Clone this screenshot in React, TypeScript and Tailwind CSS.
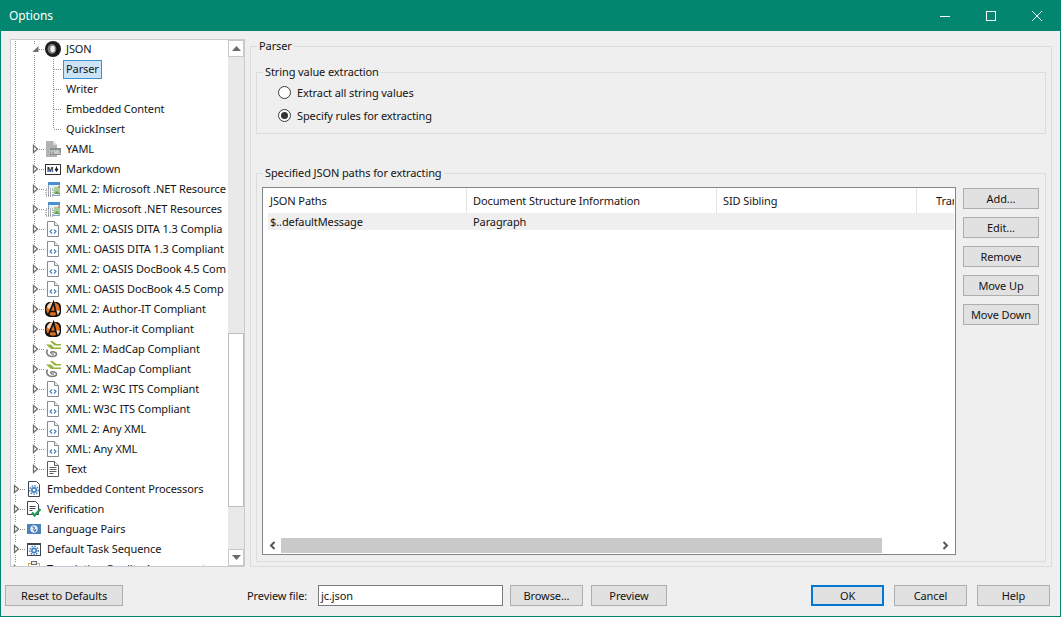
import type { ReactNode } from "react"

const DOTS = "#8f8f8f"

function Fold({ stroke = "#858b91" }: { stroke?: string }) {
  return (
    <>
      <path d="M2.5 .5h7l4 4v11h-11z" fill="#fff" stroke={stroke} />
      <path d="M9.5 .5v4h4" fill="#f0f0f0" stroke={stroke} />
    </>
  )
}

function Gear({ x, y }: { x: number; y: number }) {
  return (
    <g transform={`translate(${x} ${y})`}>
      <circle cx="0" cy="0" r="4.2" fill="none" stroke="#3f7fc0" strokeWidth="1.4" strokeDasharray="1.6 1.2" />
      <circle cx="0" cy="0" r="3" fill="#3f7fc0" />
      <circle cx="0" cy="0" r="1.3" fill="#fff" />
    </g>
  )
}

const icons: Record<string, ReactNode> = {
  json: (
    <>
      <circle cx="8" cy="8" r="8" fill="#1d1d1d" />
      <ellipse cx="7" cy="8" rx="4.4" ry="5" fill="#7d7d7d" />
      <ellipse cx="7.600" cy="8" rx="2.200" ry="3.200" fill="#f2f2f2" />
      <path d="M10.800 3.600a6 6 0 0 1 0 8.800" fill="none" stroke="#111" strokeWidth="1.600" />
    </>
  ),
  yaml: (
    <>
      <path d="M1 0h7l4 4v12H1z" fill="#b2b2b2" />
      <path d="M8 0v4h4z" fill="#d8d8d8" />
      <rect x="5" y="7" width="11" height="7" fill="#8e8e8e" />
      <text x="10.5" y="12.6" textAnchor="middle" fontSize="5.5" fontWeight="700" fill="#e8e8e8" fontFamily="Liberation Sans, sans-serif">YML</text>
    </>
  ),
  markdown: (
    <>
      <rect x=".5" y="3.5" width="15" height="10" fill="#fff" stroke="#333" />
      <text x="2" y="11.2" fontSize="7.5" fontWeight="700" fill="#222" fontFamily="Liberation Sans, sans-serif">M</text>
      <path d="M11.5 5.5v3M10 8h3l-1.5 2.5z" fill="#222" stroke="#222" strokeWidth="1" />
    </>
  ),
  resource: (
    <>
      <rect x="3.5" y="1.5" width="11" height="13" fill="#e8f1fa" stroke="#8aa4bf" />
      <rect x="3" y="1" width="12" height="3" fill="#4a90d0" />
      <rect x="1" y="8" width="7" height="7" fill="#fff" stroke="#67727d" strokeDasharray="1 1" />
      <path d="M3 10h4M3 12h4M3 14h4" stroke="#47525d" strokeWidth="1" strokeDasharray="1 1" />
      <rect x="9" y="6" width="6" height="7" fill="#a6cf9a" />
      <path d="M9 13l3-3 3 3z" fill="#5f9d4a" />
      <rect x="13" y="5" width="2" height="2" fill="#e0894a" />
    </>
  ),
  xml: (
    <>
      <Fold />
      <path d="M7 8.500 5 10.500l2 2M9 8.500l2 2-2 2" fill="none" stroke="#3f7fc0" strokeWidth="1.100" />
    </>
  ),
  authorit: (
    <>
      <rect x="0" y="1" width="16" height="15" rx="5" fill="#111" />
      <circle cx="8" cy="8" r="6.800" fill="#e0701f" />
      <path d="M2 6c1-3 3-5 6-5l-1 5-3 2zM11 9l4 1-2 4-3-1z" fill="#f7d9bf" />
      <path d="M3 15 8.500 1.500 12 15M5.500 10.500h5.500" fill="none" stroke="#111" strokeWidth="1.700" />
    </>
  ),
  madcap: (
    <>
      <path d="M5 0h2.500l4 3H16v1.500H9.500zM1 3.500h5l3 3H16V8H6z" fill="#94b33c" />
      <path d="M2.500 8.500c-2 3 0 7 4.500 7 2.500 0 4.500-1 4.500-2.500 0-2-4-3-6-1.500" fill="none" stroke="#7b7b7b" strokeWidth="1.600" />
      <path d="M5.500 11.500c0 1 1.500 2 3.500 1.500" fill="none" stroke="#3f3f3f" strokeWidth="1" />
    </>
  ),
  text: (
    <>
      <Fold stroke="#5c5c5c" />
      <path d="M4.500 6.500h7M4.500 8.500h7M4.500 10.500h7M4.500 12.500h4" stroke="#5c5c5c" strokeWidth="1" />
    </>
  ),
  embedded: (
    <>
      <path d="M2.500 .5h8l3 3v12h-11z" fill="#fff" stroke="#3d4650" />
      <Gear x={8} y={9} />
    </>
  ),
  verify: (
    <>
      <path d="M1.500 .5h8l3 3v10h-11z" fill="#fff" stroke="#3d4650" />
      <path d="M3.500 5.500h6M3.500 7.500h6M3.500 9.500h3" stroke="#3d4650" strokeWidth="1" />
      <path d="M6 11.500l2.500 3 6-6.500" fill="none" stroke="#1d9a57" strokeWidth="2.200" />
    </>
  ),
  language: (
    <>
      <rect x="1" y="3" width="14" height="10" fill="#4a82bd" />
      <circle cx="8" cy="8" r="3.700" fill="#e6eef6" />
      <path d="M6.500 5.500l2 1.500-1 1.500 1.500 2 1-2.500" fill="none" stroke="#4a82bd" strokeWidth="1.100" />
    </>
  ),
  task: (
    <>
      <rect x="1.500" y="2.500" width="13" height="12" fill="#fff" stroke="#3d4650" />
      <rect x="1" y="2" width="14" height="2" fill="#3d4650" />
      <Gear x={8} y={9.500} />
    </>
  ),
  clipboard: (
    <>
      <rect x="2.500" y="2.500" width="11" height="13" fill="#fff" stroke="#d2a85c" />
      <rect x="5.500" y=".5" width="5" height="3" fill="#eee" stroke="#6a6a6a" />
    </>
  ),
}

type Row = { label: string; level: 0 | 1 | 2; icon?: string; open?: boolean; last?: boolean; selected?: boolean }

const rows: Row[] = [
  { label: "JSON", level: 1, icon: "json", open: true },
  { label: "Parser", level: 2, selected: true },
  { label: "Writer", level: 2 },
  { label: "Embedded Content", level: 2 },
  { label: "QuickInsert", level: 2, last: true },
  { label: "YAML", level: 1, icon: "yaml" },
  { label: "Markdown", level: 1, icon: "markdown" },
  { label: "XML 2: Microsoft .NET Resource", level: 1, icon: "resource" },
  { label: "XML: Microsoft .NET Resources", level: 1, icon: "resource" },
  { label: "XML 2: OASIS DITA 1.3 Complia", level: 1, icon: "xml" },
  { label: "XML: OASIS DITA 1.3 Compliant", level: 1, icon: "xml" },
  { label: "XML 2: OASIS DocBook 4.5 Com", level: 1, icon: "xml" },
  { label: "XML: OASIS DocBook 4.5 Comp", level: 1, icon: "xml" },
  { label: "XML 2: Author-IT Compliant", level: 1, icon: "authorit" },
  { label: "XML: Author-it Compliant", level: 1, icon: "authorit" },
  { label: "XML 2: MadCap Compliant", level: 1, icon: "madcap" },
  { label: "XML: MadCap Compliant", level: 1, icon: "madcap" },
  { label: "XML 2: W3C ITS Compliant", level: 1, icon: "xml" },
  { label: "XML: W3C ITS Compliant", level: 1, icon: "xml" },
  { label: "XML 2: Any XML", level: 1, icon: "xml" },
  { label: "XML: Any XML", level: 1, icon: "xml" },
  { label: "Text", level: 1, icon: "text", last: true },
  { label: "Embedded Content Processors", level: 0, icon: "embedded" },
  { label: "Verification", level: 0, icon: "verify" },
  { label: "Language Pairs", level: 0, icon: "language" },
  { label: "Default Task Sequence", level: 0, icon: "task" },
  { label: "Translation Quality Assessment", level: 0, icon: "clipboard" },
]

function Dotted({ d }: { d: string }) {
  return <path d={d} stroke={DOTS} strokeWidth="1" strokeDasharray="1 1" fill="none" />
}

function Arrow({ x, open }: { x: number; open?: boolean }) {
  if (open) return <path d={`M${x + 5.500} 7v6h-6z`} fill="#6d6d6d" />
  return <path d={`M${x + .5} 6.500l4 3.500-4 3.500z`} fill="#fff" stroke="#6f6f6f" strokeWidth="1.300" />
}

function TreeRow({ row }: { row: Row }) {
  const width = row.level === 0 ? 36 : row.level === 1 ? 55 : 52
  return (
    <div className="flex h-5 shrink-0 items-center">
      <svg width={width} height="20" viewBox={`0 0 ${width} 20`} className="shrink-0">
        {row.level > 0 && <Dotted d="M4.500 0v20" />}
        {row.level === 0 && <Dotted d="M4.500 0v4M4.500 16v4" />}
        {row.level === 1 && <Dotted d={row.last ? "M23.500 0v5" : "M23.500 0v5M23.500 16v4"} />}
        {row.level === 2 && (
          <>
            <Dotted d="M23.500 0v20" />
            <Dotted d={row.last ? "M42.500 0v10M43 10.500h8" : "M42.500 0v20M43 10.500h8"} />
          </>
        )}
        {row.level === 0 && <Dotted d="M9 10.500h5" />}
        {row.level === 1 && <Dotted d="M28 10.500h5" />}
        {row.level === 0 && <Arrow x={3} />}
        {row.level === 1 && <Arrow x={22} open={row.open} />}
        {row.icon && <g transform={`translate(${row.level === 0 ? 15 : 34} 2)`}>{icons[row.icon]}</g>}
      </svg>
      {row.selected ? (
        <span className="mt-[1px] flex h-[19px] items-center border border-[#3d92d3] bg-[#cde4f7] px-[2px] pb-[2px]">{row.label}</span>
      ) : (
        <span className={row.level === 2 ? "whitespace-nowrap pb-[2px] pl-[3px]" : "whitespace-nowrap pb-[2px]"}>{row.label}</span>
      )}
    </div>
  )
}

function ScrollButton({ down }: { down?: boolean }) {
  return (
    <div className="flex h-[17px] w-[16px] shrink-0 items-center justify-center border border-[#c8c8c8] bg-white">
      <svg width="9" height="5" viewBox="0 0 9 5">
        <path d={down ? "M0 0h9L4.500 5z" : "M0 5h9L4.500 0z"} fill="#6a6a6a" />
      </svg>
    </div>
  )
}

function Tree() {
  return (
    <div className="flex h-[528px] w-[235px] shrink-0 overflow-hidden border border-[#c6ccd2] bg-white">
      <div className="-mt-px flex w-[217px] shrink-0 flex-col overflow-hidden">
        {rows.map((row) => (
          <TreeRow key={row.label} row={row} />
        ))}
      </div>
      <div className="flex w-[17px] flex-col bg-[#e9e9e9]">
        <ScrollButton />
        <div className="mt-[276px] h-[174px] w-[16px] border border-[#bdbdbd] bg-white" />
        <div className="mt-auto">
          <ScrollButton down />
        </div>
      </div>
    </div>
  )
}

function Button({ children, className = "w-[76px]" }: { children: ReactNode; className?: string }) {
  return (
    <button className={`flex h-[21px] shrink-0 items-center justify-center border border-[#adadad] bg-[#e1e1e1] ${className}`}>
      {children}
    </button>
  )
}

function Radio({ label, checked }: { label: string; checked?: boolean }) {
  return (
    <div className="flex h-[23px] items-center">
      <span className="flex h-[13px] w-[13px] items-center justify-center rounded-full border border-[#3c3c3c] bg-white">
        {checked && <span className="h-[7px] w-[7px] rounded-full bg-[#333]" />}
      </span>
      <span className="ml-[6px]">{label}</span>
    </div>
  )
}

function PathsTable() {
  return (
    <div className="flex h-[368px] w-[694px] shrink-0 flex-col border border-[#82868b] bg-white">
      <div className="flex h-[25px] w-[691px] shrink-0 items-center overflow-hidden whitespace-nowrap">
        <div className="flex h-full w-[204px] shrink-0 items-center border-r border-[#e5e5e5] pl-[7px]">JSON Paths</div>
        <div className="flex h-full w-[250px] shrink-0 items-center border-r border-[#e5e5e5] pl-[6px]">Document Structure Information</div>
        <div className="flex h-full w-[200px] shrink-0 items-center border-r border-[#e5e5e5] pl-[6px]">SID Sibling</div>
        <div className="pl-[19px]">Tran</div>
      </div>
      <div className="ml-[5px] flex h-[17px] w-[686px] shrink-0 items-center bg-[#efefef]">
        <div className="w-[199px] pl-[2px]">$..defaultMessage</div>
        <div className="pl-[6px]">Paragraph</div>
      </div>
      <div className="mb-[1px] mt-auto flex h-[15px] shrink-0 items-center">
        <div className="flex w-[18px] justify-center">
          <svg width="7" height="9" viewBox="0 0 7 9">
            <path d="M5.500 1 2 4.500 5.500 8" fill="none" stroke="#555" strokeWidth="2" />
          </svg>
        </div>
        <div className="h-full w-[601px] bg-[#c9c9c9]" />
        <div className="flex flex-1 justify-end pr-[6px]">
          <svg width="7" height="9" viewBox="0 0 7 9">
            <path d="M1.500 1 5 4.500 1.500 8" fill="none" stroke="#555" strokeWidth="2" />
          </svg>
        </div>
      </div>
    </div>
  )
}

export default function App() {
  return (
    <div className="flex h-[617px] w-[1061px] flex-col overflow-hidden border-x border-b border-[#02866f] bg-[#efefef] font-['Noto_Sans',sans-serif] text-[11px] leading-none tracking-[-0.1px] text-[#141414]">
      <div className="-mx-px flex h-[31px] shrink-0 items-center bg-[#02866f] pl-[9px] text-[12px] text-white">
        Options
        <div className="ml-auto flex h-full pr-px">
          <div className="flex w-[46px] items-center justify-center">
            <svg width="10" height="10" viewBox="0 0 10 10">
              <path d="M0 5.500h10" stroke="#fff" />
            </svg>
          </div>
          <div className="flex w-[46px] items-center justify-center">
            <svg width="10" height="10" viewBox="0 0 10 10">
              <rect x=".5" y=".5" width="9" height="9" fill="none" stroke="#fff" />
            </svg>
          </div>
          <div className="flex w-[46px] items-center justify-center">
            <svg width="10" height="10" viewBox="0 0 10 10">
              <path d="M0 0l10 10M10 0L0 10" stroke="#fff" />
            </svg>
          </div>
        </div>
      </div>

      <div className="flex">
        <div className="ml-[9px] mt-[8px]">
          <Tree />
        </div>
        <fieldset className="ml-[5px] mt-[7px] h-[529px] w-[802px] shrink-0 border border-[#dcdcdc] px-[5px]">
          <legend className="ml-[1px] h-4 px-[2px] leading-4">Parser</legend>
          <fieldset className="mt-[10px] h-[70px] border border-[#dcdcdc]">
            <legend className="ml-[6px] h-4 px-[2px] leading-4">String value extraction</legend>
            <div className="mt-px pl-[21px]">
              <Radio label="Extract all string values" />
              <Radio label="Specify rules for extracting" checked />
            </div>
          </fieldset>
          <fieldset className="mt-[31px] h-[397px] border border-[#dcdcdc]">
            <legend className="ml-[6px] h-4 px-[2px] leading-4">Specified JSON paths for extracting</legend>
            <div className="mt-[6px] flex pl-[5px]">
              <PathsTable />
              <div className="ml-[7px] mt-px flex flex-col gap-2">
                <Button>Add...</Button>
                <Button>Edit...</Button>
                <Button>Remove</Button>
                <Button>Move Up</Button>
                <Button>Move Down</Button>
              </div>
            </div>
          </fieldset>
        </fieldset>
      </div>

      <div className="ml-[4px] mr-[10px] mt-[18px] flex items-center">
        <Button className="w-[118px]">Reset to Defaults</Button>
        <span className="ml-[124px] w-[71px] shrink-0">Preview file:</span>
        <div className="flex h-[21px] w-[185px] shrink-0 items-center border border-[#7a7a7a] bg-white pl-[2px]">jc.json</div>
        <Button className="ml-[7px] w-[73px]">Browse...</Button>
        <Button className="ml-[8px] w-[76px]">Preview</Button>
        <button className="ml-auto flex h-[21px] w-[73px] items-center justify-center border-2 border-[#0078d7] bg-[#e1e1e1]">OK</button>
        <Button className="ml-[10px] w-[73px]">Cancel</Button>
        <Button className="ml-[10px] w-[73px]">Help</Button>
      </div>
    </div>
  )
}
